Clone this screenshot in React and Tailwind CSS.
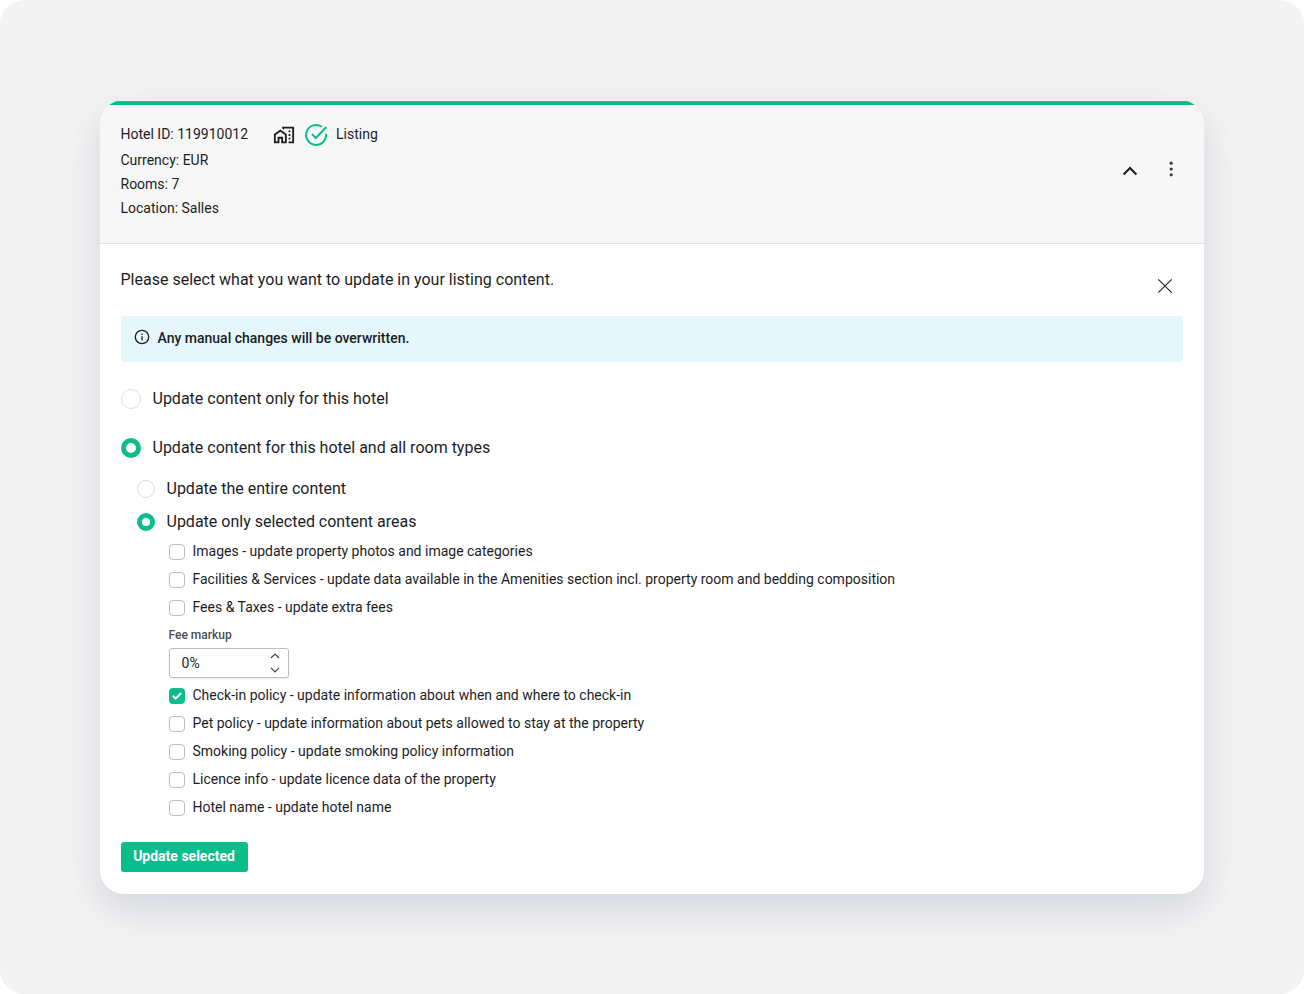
import React, { useState } from 'react';
import { MdOutlineHomeWork } from 'react-icons/md';

const contentAreasTop = [
  { id: 'images', label: 'Images - update property photos and image categories' },
  { id: 'facilities', label: 'Facilities & Services - update data available in the Amenities section incl. property room and bedding composition' },
  { id: 'fees', label: 'Fees & Taxes - update extra fees' },
];

const contentAreasBottom = [
  { id: 'checkin', label: 'Check-in policy - update information about when and where to check-in' },
  { id: 'pets', label: 'Pet policy - update information about pets allowed to stay at the property' },
  { id: 'smoking', label: 'Smoking policy - update smoking policy information' },
  { id: 'licence', label: 'Licence info - update licence data of the property' },
  { id: 'name', label: 'Hotel name - update hotel name' },
];

const Radio = ({ checked, small, label, onClick }) => (
  <button type="button" role="radio" aria-checked={checked} onClick={onClick} className="flex items-center text-left">
    <span
      className={`
        shrink-0 rounded-full bg-white mr-[11.5px]
        ${small ? 'w-[18px] h-[18px]' : 'w-5 h-5'}
        ${checked ? (small ? 'border-5 border-[#0bbd8b]' : 'border-[5.5px] border-[#0bbd8b]') : 'border border-[#dfdfdf]'}
      `}
    />
    <span className={`text-base whitespace-nowrap ${small ? 'leading-[18px]' : 'leading-5'}`}>{label}</span>
  </button>
);

const Checkbox = ({ checked, label, onClick }) => (
  <button type="button" role="checkbox" aria-checked={checked} onClick={onClick} className="flex items-center h-4 text-left">
    <span
      className={`
        shrink-0 w-4 h-4 mr-[7.5px] rounded flex items-center justify-center
        ${checked ? 'bg-[#0bbd8b]' : 'bg-white border border-[#bdbdbd]'}
      `}
    >
      {checked && (
        <svg width="10" height="8" viewBox="0 0 10 8" fill="none" stroke="#fff" strokeWidth="2">
          <path d="M0.8 3.8l2.8 2.8L9.2 1" />
        </svg>
      )}
    </span>
    <span className="relative -top-px text-sm leading-4 whitespace-nowrap">{label}</span>
  </button>
);

const App = () => {
  const [scope, setScope] = useState('all');
  const [mode, setMode] = useState('selected');
  const [selected, setSelected] = useState({ checkin: true });
  const [markup, setMarkup] = useState(0);

  const toggle = (id) => setSelected(prev => ({ ...prev, [id]: !prev[id] }));

  return (
    <div className="bg-white">
      <div className="w-[1304px] h-[994px] p-[100px] rounded-[24px] bg-[#f3f3f3] font-['Roboto',sans-serif] text-[#1d1d1f]">
        <div className="h-[794px] rounded-[24px] bg-white overflow-hidden shadow-[0_16px_40px_rgba(88,98,140,0.2)]">
          {/* Header */}
          <div className="h-36 bg-[#f7f7f7] border-b border-[#e1e3e4] flex flex-col">
            <div className="h-1 mt-px shrink-0 bg-[#0bbd8b]" />
            <div className="flex justify-between pt-[15px] pl-[20.5px] pr-[21px]">
              <div className="text-sm">
                <div className="flex items-center h-7">
                  <span>Hotel ID: 119910012</span>
                  <MdOutlineHomeWork className="ml-[25px] mt-[2px] w-[22px] h-[22px]" />
                  <svg className="ml-[9px] mr-2 mt-[2px] w-6 h-6" viewBox="0 0 24 24" fill="none" stroke="#0bbd8b" strokeWidth="2">
                    <path d="M22 10.6A10 10 0 1 1 17.9 3.8" />
                    <path d="M7.9 11l4 4L22.3 4" />
                  </svg>
                  <span>Listing</span>
                </div>
                <p className="leading-6">Currency: EUR</p>
                <p className="leading-6">Rooms: 7</p>
                <p className="leading-6">Location: Salles</p>
              </div>
              <div className="flex items-center h-[102px]">
                <svg className="w-4 h-4 mr-[21px]" viewBox="0 0 16 16" fill="none" stroke="currentColor" strokeWidth="2">
                  <path d="M1.6 11.5L8 5l6.4 6.5" />
                </svg>
                <svg className="w-6 h-4 mb-1" viewBox="0 0 24 16" fill="#3d3a44">
                  <circle cx="12.2" cy="2.2" r="1.6" />
                  <circle cx="12.2" cy="8" r="1.6" />
                  <circle cx="12.2" cy="13.8" r="1.6" />
                </svg>
              </div>
            </div>
          </div>

          {/* Content */}
          <div className="px-[21px]">
            <div className="h-[72px] flex justify-between pt-6">
              <h2 className="text-base leading-6 -ml-[0.5px]">Please select what you want to update in your listing content.</h2>
              <svg className="w-4 h-4 mt-[10px] mr-[10px]" viewBox="0 0 16 16" fill="none" stroke="#2b2333" strokeWidth="1.2">
                <path d="M1.3 1.3l13.4 13.4M14.7 1.3L1.3 14.7" />
              </svg>
            </div>

            <div className="h-[46px] rounded-[3px] bg-[#e5f6fd] flex items-start pt-[14px] pl-[13px]">
              <svg className="w-4 h-4 -mt-px" viewBox="0 0 16 16" fill="none" stroke="currentColor" strokeWidth="1.3">
                <circle cx="8" cy="8" r="6.7" />
                <path d="M8 7.2v4M8 4.6v1.3" />
              </svg>
              <p className="ml-[7.5px] text-sm leading-4 font-medium">Any manual changes will be overwritten.</p>
            </div>

            <div role="radiogroup" className="mt-[27px] flex flex-col items-start gap-[29px]">
              <Radio checked={scope === 'hotel'} onClick={() => setScope('hotel')} label="Update content only for this hotel" />
              <Radio checked={scope === 'all'} onClick={() => setScope('all')} label="Update content for this hotel and all room types" />
            </div>

            <div role="radiogroup" className="mt-[22px] ml-4 flex flex-col items-start gap-[15px]">
              <Radio small checked={mode === 'entire'} onClick={() => setMode('entire')} label="Update the entire content" />
              <Radio small checked={mode === 'selected'} onClick={() => setMode('selected')} label="Update only selected content areas" />
            </div>

            <div className="ml-12 mt-[13px]">
              <div className="flex flex-col items-start gap-3">
                {contentAreasTop.map(area => (
                  <Checkbox key={area.id} checked={!!selected[area.id]} onClick={() => toggle(area.id)} label={area.label} />
                ))}
              </div>

              {/* Fee markup */}
              <p className="mt-[11px] -ml-[0.5px] text-xs leading-4 font-medium text-[#4a4f55]">Fee markup</p>
              <div className="mt-[5px] w-[120px] h-[30px] pl-[11.5px] pr-2 flex items-center justify-between rounded-[3px] border border-[#bdbdbd] shadow-[0_1px_2px_rgba(0,0,0,0.08)] text-sm">
                <span>{markup}%</span>
                <div className="flex flex-col gap-[6px]">
                  <button type="button" aria-label="Increase" onClick={() => setMarkup(markup + 1)}>
                    <svg className="block w-[10px] h-[7px]" viewBox="0 0 10 7" fill="none" stroke="#424242" strokeWidth="1.2">
                      <path d="M1 5l4-4 4 4" />
                    </svg>
                  </button>
                  <button type="button" aria-label="Decrease" onClick={() => setMarkup(Math.max(0, markup - 1))}>
                    <svg className="block w-[10px] h-[7px]" viewBox="0 0 10 7" fill="none" stroke="#424242" strokeWidth="1.2">
                      <path d="M1 1.8l4 4 4-4" />
                    </svg>
                  </button>
                </div>
              </div>

              <div className="mt-[10px] flex flex-col items-start gap-3">
                {contentAreasBottom.map(area => (
                  <Checkbox key={area.id} checked={!!selected[area.id]} onClick={() => toggle(area.id)} label={area.label} />
                ))}
              </div>
            </div>

            <button type="button" className="mt-[26px] w-[127px] h-[30px] pb-[2px] pr-px rounded-[3px] bg-[#0bbd8b] text-white text-sm font-bold flex items-center justify-center">
              Update selected
            </button>
          </div>
        </div>
      </div>
    </div>
  );
};

export default App;
